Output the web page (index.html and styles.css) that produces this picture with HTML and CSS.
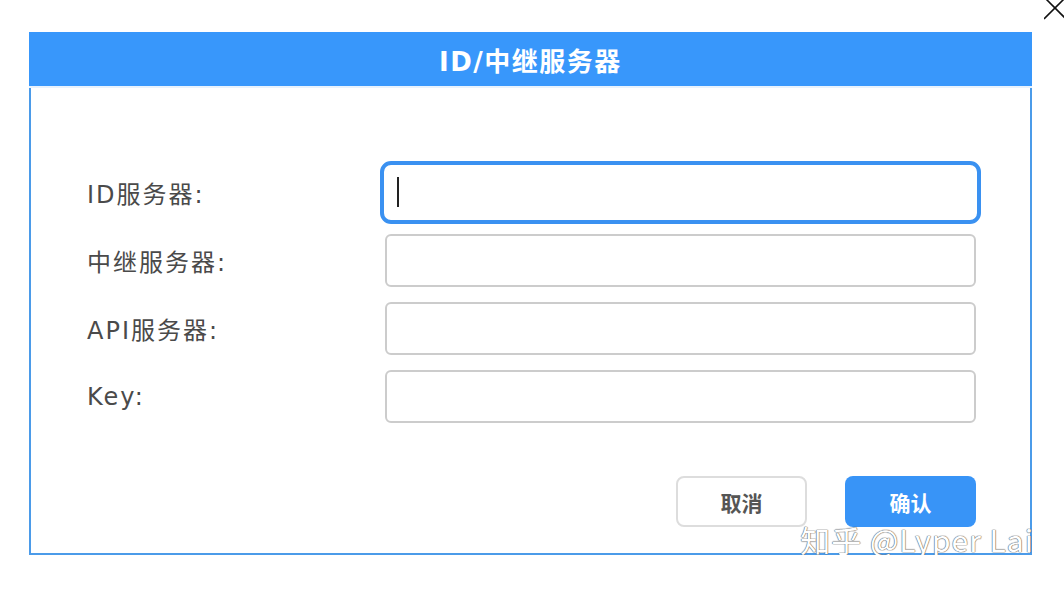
FILE: index.html
```html
<!DOCTYPE html>
<html lang="zh-CN">
<head>
    <meta charset="UTF-8">
    <title>ID/中继服务器</title>
    <link rel="stylesheet" href="styles.css">
</head>
<body>
    <svg class="close-x" width="21" height="20" viewBox="0 0 21 20">
        <line x1="0" y1="19" x2="20" y2="-1" stroke="#111" stroke-width="1.6"/>
        <line x1="2" y1="-1" x2="22" y2="19" stroke="#111" stroke-width="1.6"/>
    </svg>
    <div class="dialog">
        <div class="dialog-title">ID/中继服务器</div>
        <div class="dialog-body">
            <div class="row">
                <label for="id_server">ID服务器:</label>
                <span class="field is-focused"><input type="text" id="id_server"></span>
            </div>
            <div class="row">
                <label for="relay_server">中继服务器:</label>
                <span class="field"><input type="text" id="relay_server"></span>
            </div>
            <div class="row">
                <label for="api_server">API服务器:</label>
                <span class="field"><input type="text" id="api_server"></span>
            </div>
            <div class="row">
                <label for="key">Key:</label>
                <span class="field"><input type="text" id="key"></span>
            </div>
            <div class="actions">
                <button class="btn btn-cancel" type="button">取消</button>
                <button class="btn btn-ok" type="button">确认</button>
            </div>
            <div class="watermark">知乎 @Lyper Lai</div>
        </div>
    </div>
</body>
</html>
```

FILE: styles.css
```css
body {
    margin: 0;
    background: #ffffff;
    font-family: "DejaVu Sans", "Noto Sans CJK SC", sans-serif;
    overflow: hidden;
}
.close-x {
    position: absolute;
    top: 0;
    left: 1044px;
}
.dialog {
    width: 1003px;
    margin: 32px 0 0 29px;
}
.dialog-title {
    height: 54px;
    line-height: 60px;
    background: #3897fb;
    color: #ffffff;
    text-align: center;
    font-size: 26px;
    font-weight: bold;
    letter-spacing: 1.5px;
    border-bottom: 2px solid #e8f2fd;
    overflow: hidden;
}
.dialog-body {
    position: relative;
    border: 2px solid #4b9be9;
    border-top: none;
    padding: 78px 54px 26px 56px;
}
.row {
    display: flex;
    align-items: center;
    margin-bottom: 15px;
}
.row label {
    width: 298px;
    font-size: 24px;
    letter-spacing: 2px;
    color: #4a4a4a;
}
.field {
    position: relative;
    flex: 1;
    display: flex;
}
.field input {
    flex: 1;
    height: 53px;
    box-sizing: border-box;
    border: 2px solid #cccccc;
    border-radius: 6px;
    background: #ffffff;
    padding: 0 12px;
    font-size: 20px;
    outline: none;
}
.is-focused input {
    border-color: #ffffff;
    outline: 4px solid #3a91f1;
    outline-offset: 1px;
    border-radius: 6px;
}
/* static caret, the screenshot was taken mid-blink */
.is-focused::before {
    content: '';
    position: absolute;
    left: 12px;
    top: 11px;
    width: 2px;
    height: 30px;
    background: #222222;
}
.actions {
    display: flex;
    justify-content: flex-end;
    gap: 38px;
    margin-top: 53px;
}
.btn {
    width: 131px;
    height: 51px;
    border-radius: 8px;
    font-family: "Noto Sans CJK SC", sans-serif;
    font-size: 21px;
    font-weight: bold;
    cursor: pointer;
}
.btn-cancel {
    background: #ffffff;
    border: 2px solid #dddddd;
    color: #555555;
}
.btn-ok {
    background: #3894f7;
    border: none;
    color: #ffffff;
}
.watermark {
    position: absolute;
    right: -4px;
    bottom: -8px;
    font-family: "Noto Sans CJK SC", sans-serif;
    font-size: 30px;
    color: #ffffff;
    text-shadow: 0 0 1px #666, 0 0 1px #666, 0 0 1px #666;
    letter-spacing: 1px;
}
```
